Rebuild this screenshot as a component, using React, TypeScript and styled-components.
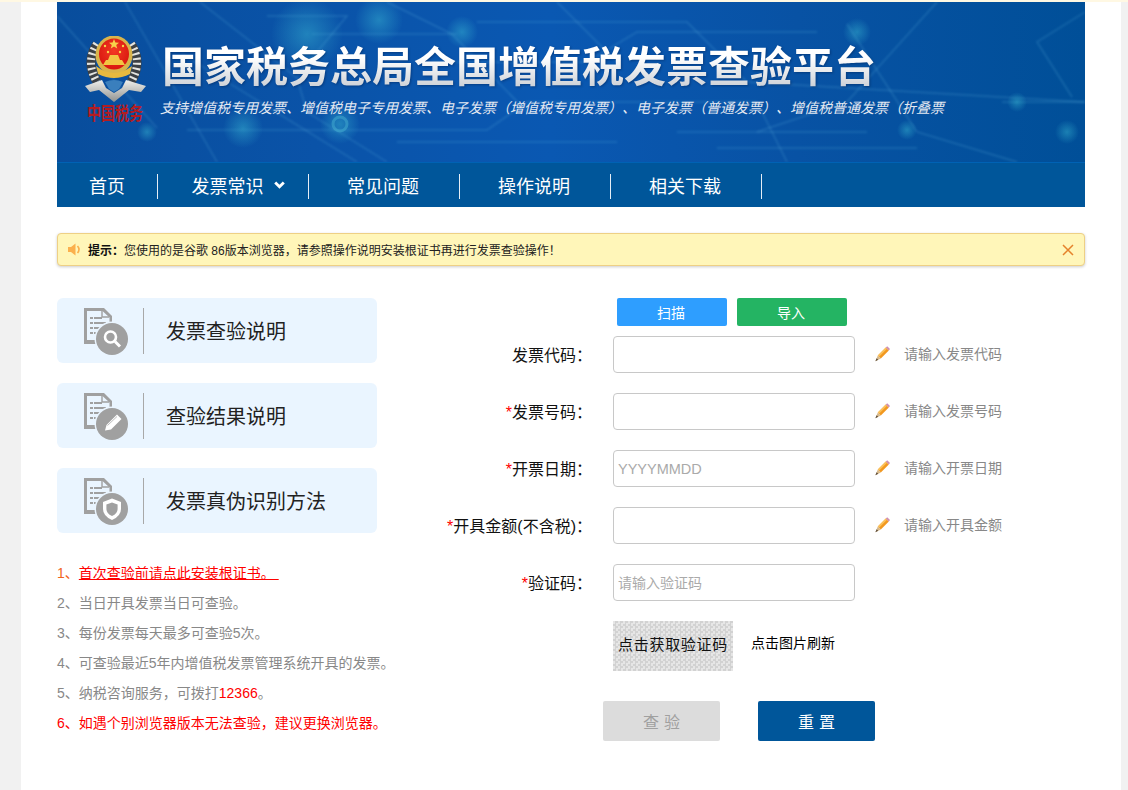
import React from 'react'
import styled, { createGlobalStyle } from 'styled-components'

const GlobalStyle = createGlobalStyle`
  html, body {
    margin: 0;
    padding: 0;
    background: #f1f1f1;
    font-family: "Liberation Sans", "Noto Sans CJK SC", sans-serif;
    text-spacing-trim: space-all;
  }
  * {
    box-sizing: border-box;
  }
`

const TopStrip = styled.div`
  height: 2px;
  background: #fff8e3;
`

const Page = styled.div`
  width: 1100px;
  margin-left: 21px;
  min-height: 788px;
  padding: 0 36px;
  background: #fff;
`

const Banner = styled.header`
  position: relative;
  display: flex;
  height: 160px;
  padding: 34px 0 0 27px;
  overflow: hidden;
  background: linear-gradient(90deg, #084d9c 0%, #0a53a8 25%, #0a58b2 48%, #0852a4 72%, #004f98 100%);
`

const CircuitArt = styled.svg`
  position: absolute;
  top: 0;
  left: 0;
`

const Logo = styled.svg`
  position: relative;
  flex: none;
`

const BannerText = styled.div`
  position: relative;
  margin-left: 13px;
`

const Title = styled.h1`
  margin: 6px 0 0 1px;
  font-size: 42px;
  line-height: 52px;
  font-weight: 700;
  white-space: nowrap;
  color: transparent;
  background: linear-gradient(180deg, #ffffff 30%, #cfd3d8 85%);
  background-clip: text;
  -webkit-background-clip: text;
  filter: drop-shadow(1px 1px 1px rgba(0, 30, 80, 0.45));
`

const SubTitle = styled.p`
  margin: 4px 0 0 -1px;
  font-size: 14px;
  line-height: 20px;
  font-style: italic;
  white-space: nowrap;
  color: #e4e9f2;
`

const Nav = styled.nav`
  display: flex;
  height: 45px;
  padding-top: 11px;
  background: #00569a;
  border-top: 1px solid #0062b4;
`

const NavItem = styled.a<{ $first?: boolean; $menu?: boolean }>`
  display: flex;
  align-items: center;
  justify-content: ${(p) => (p.$first ? 'flex-start' : 'center')};
  gap: 10px;
  width: ${(p) => (p.$first ? '101px' : '151px')};
  height: 25px;
  padding-left: ${(p) => (p.$first ? '32px' : p.$menu ? '12px' : '0')};
  padding-right: ${(p) => (p.$first ? '0' : '2px')};
  padding-bottom: 4px;
  font-size: 18px;
  color: #fff;
  border-right: 1px solid #e6eef6;
`

const Alert = styled.div`
  display: flex;
  align-items: center;
  height: 33px;
  margin-top: 26px;
  padding: 0 10px;
  font-size: 12px;
  color: #222;
  background: #fff6b9;
  border: 1px solid #eed085;
  border-radius: 4px;
  box-shadow: 0 1px 3px rgba(0, 0, 0, 0.2);
`

const AlertLabel = styled.strong`
  margin-left: 7px;
  color: #111;
`

const CloseIcon = styled.svg`
  margin-left: auto;
`

const Columns = styled.div`
  display: flex;
  align-items: flex-start;
  margin-top: 32px;
`

const Side = styled.aside`
  flex: none;
  width: 350px;
`

const GuideCard = styled.a`
  display: flex;
  align-items: center;
  width: 320px;
  height: 65px;
  margin-bottom: 20px;
  padding-left: 27px;
  font-size: 20px;
  color: #222;
  background: #eaf5ff;
  border-radius: 6px;
`

const Divider = styled.span`
  width: 1px;
  height: 46px;
  margin: 0 22px 0 13px;
  background: #a8a8a8;
`

const Notes = styled.ul`
  margin: 25px 0 0;
  padding: 0;
  list-style: none;
  font-size: 14px;
  line-height: 30px;
  white-space: nowrap;
  color: #888;
`

const Note = styled.li<{ $red?: boolean }>`
  color: ${(p) => (p.$red ? '#f00' : 'inherit')};
`

const Red = styled.span`
  color: #f00;
`

const Orange = styled.span`
  color: #f2651d;
`

const NoteLink = styled.a`
  color: #f00;
  text-decoration: underline;
  white-space: pre;
`

const Form = styled.form`
  display: flex;
  flex-direction: column;
`

const ToolRow = styled.div`
  display: flex;
  gap: 10px;
  margin-left: 210px;
  margin-bottom: 10px;
`

const ToolButton = styled.button<{ $color: string }>`
  width: 110px;
  height: 28px;
  padding: 0 2px 0 0;
  font: inherit;
  font-size: 14px;
  color: #fff;
  background: ${(p) => p.$color};
  border: 0;
  border-radius: 2px;
`

const Field = styled.div`
  display: flex;
  align-items: center;
  height: 37px;
  margin-bottom: 20px;
`

const Label = styled.label`
  width: 185px;
  margin: 0 21px 2px 0;
  font-size: 16px;
  text-align: right;
  white-space: nowrap;
  color: #111;
`

const Star = styled.span`
  color: #f00;
`

const Input = styled.input<{ $small?: boolean }>`
  width: 242px;
  height: 37px;
  padding: 0 4px;
  font-family: inherit;
  font-size: ${(p) => (p.$small ? '14px' : '14.5px')};
  background: #fff;
  border: 1px solid #c8c8c8;
  border-radius: 4px;
  outline: none;
  &::placeholder {
    color: #aaa;
  }
`

const Pencil = styled.svg`
  margin: 0 14px 1px 20px;
`

const Hint = styled.span`
  margin-bottom: 4px;
  font-size: 14px;
  color: #888;
`

const CaptchaRow = styled.div`
  display: flex;
  align-items: center;
  height: 50px;
  margin-left: 206px;
`

const Captcha = styled.div`
  display: flex;
  align-items: center;
  justify-content: center;
  width: 120px;
  height: 50px;
  margin-right: 18px;
  padding-bottom: 6px;
  font-size: 15px;
  letter-spacing: 0.7px;
  white-space: nowrap;
  color: #111;
  background: repeating-conic-gradient(#d2d2d2 0 25%, #e6e6e6 0 50%) 0 0 / 5px 5px;
`

const Refresh = styled.span`
  padding-bottom: 8px;
  font-size: 14px;
  color: #000;
`

const Actions = styled.div`
  display: flex;
  gap: 38px;
  margin: 30px 0 0 196px;
`

const ActionButton = styled.button<{ $disabled?: boolean }>`
  width: 117px;
  height: 40px;
  padding: 0 0 0 5px;
  font: inherit;
  font-size: 16px;
  letter-spacing: 5px;
  color: ${(p) => (p.$disabled ? '#a0a0a0' : '#fff')};
  background: ${(p) => (p.$disabled ? '#dcdcdc' : '#00569a')};
  border: 0;
  border-radius: 2px;
`

const Circuit = () => (
  <CircuitArt width="1028" height="160" viewBox="0 0 1028 160">
    <defs>
      <radialGradient id="glow">
        <stop offset="0%" stopColor="#3fc4d8" stopOpacity="0.42" />
        <stop offset="100%" stopColor="#3fc4d8" stopOpacity="0" />
      </radialGradient>
      <filter id="soft">
        <feGaussianBlur stdDeviation="0.8" />
      </filter>
    </defs>
    <g fill="none" stroke="#6fc5ea" strokeOpacity="0.22" strokeWidth="1.4" filter="url(#soft)">
      <path d="M0 14 L100 126" />
      <path d="M68 0 L160 160" />
      <path d="M143 0 L240 76 L250 110 L330 160" />
      <path d="M210 14 L290 14 L240 74" />
      <path d="M255 32 L400 32" />
      <path d="M330 0 L395 32 L470 110" />
      <path d="M125 52 L300 160" />
      <path d="M375 60 L530 60 L580 30 L760 30" />
      <path d="M130 128 L430 128 L470 100 L700 100" />
      <path d="M420 20 L630 20 L690 80 L1028 100" />
      <path d="M500 0 L560 60" />
      <path d="M790 22 L860 130 L960 160" />
      <path d="M700 100 L730 160" />
      <path d="M880 0 L790 100 L700 130" />
      <path d="M945 100 L1028 100" />
      <path d="M1015 95 L980 40 L1028 10" />
      <path d="M340 140 L560 140 M620 130 L810 130 M660 146 L860 146" />
    </g>
    <g fill="url(#glow)">
      <circle cx="250" cy="32" r="36" />
      <circle cx="322" cy="18" r="24" />
      <circle cx="186" cy="126" r="20" />
      <circle cx="283" cy="122" r="20" />
      <circle cx="405" cy="30" r="16" />
      <circle cx="800" cy="30" r="14" />
      <circle cx="960" cy="100" r="10" />
      <circle cx="1010" cy="130" r="12" />
      <circle cx="850" cy="128" r="10" />
      <circle cx="90" cy="130" r="10" />
    </g>
    <circle cx="283" cy="122" r="7" fill="none" stroke="#58c8dc" strokeOpacity="0.35" strokeWidth="3" />
  </CircuitArt>
)

const TaxLogo = () => (
  <Logo width="64" height="90" viewBox="0 0 64 90">
    <defs>
      <radialGradient id="seal" cx="50%" cy="40%" r="60%">
        <stop offset="0%" stopColor="#f33a24" />
        <stop offset="100%" stopColor="#d9170f" />
      </radialGradient>
      <linearGradient id="silver" x1="0" y1="0" x2="0" y2="1">
        <stop offset="0%" stopColor="#f0f0ec" />
        <stop offset="100%" stopColor="#8f918f" />
      </linearGradient>
    </defs>
    <path d="M13 8 Q1 26 13 46" fill="none" stroke="#3c4044" strokeWidth="9" />
    <path d="M47 8 Q59 26 47 46" fill="none" stroke="#3c4044" strokeWidth="9" />
    <path d="M13 8 Q1 26 13 46" fill="none" stroke="#e4e4e0" strokeWidth="8" strokeDasharray="2 3" />
    <path d="M47 8 Q59 26 47 46" fill="none" stroke="#e4e4e0" strokeWidth="8" strokeDasharray="2 3" />
    <ellipse cx="30" cy="19" rx="18.5" ry="19.5" fill="#d9b44a" />
    <ellipse cx="30" cy="18" rx="15" ry="15.5" fill="url(#seal)" />
    <path d="M28.6 6.5 l1.4 -3.5 1.4 3.5 3.6 .2 -2.8 2.3 1 3.5 -3.2 -2 -3.2 2 1 -3.5 -2.8 -2.3 z" fill="#f7d24a" />
    <g fill="#f7d24a">
      <circle cx="21" cy="10" r="1.2" />
      <circle cx="39" cy="10" r="1.2" />
      <circle cx="24" cy="16" r="1.2" />
      <circle cx="36" cy="16" r="1.2" />
    </g>
    <path d="M22 24 L38 24 L41 29 L19 29 Z M26 19 L34 19 L36 24 L24 24 Z" fill="#f2c643" />
    <path d="M12 30 Q30 44 48 30 L46 38 Q30 46 14 38 Z" fill="#e6b93f" />
    <path d="M1 50 L18 44 L22 52 L30 57 L38 52 L42 44 L62 50 L57 56 L45 54 L30 66 L15 54 L6 56 Z" fill="url(#silver)" />
    <path d="M21 46 Q30 42 39 46 L35 53 L30 56 L25 53 Z" fill="#3a7fbd" />
    <text x="3" y="65" transform="scale(1 1.3)" fontSize="14" fontWeight="700" fill="#b51c20" fontFamily="'Noto Sans CJK SC', sans-serif">中国税务</text>
  </Logo>
)

const DocIcon = ({ children }: { children: React.ReactNode }) => (
  <svg width="46" height="48" viewBox="0 0 46 48">
    <path d="M0 1 H20 L28 9 V37 H0 Z M3 4 V33 H25.5 V10.5 L18.5 4 Z" fill="#a0a0a0" fillRule="evenodd" />
    <path d="M18 4 V10 H25" fill="none" stroke="#a0a0a0" strokeWidth="1.4" />
    <path d="M6 11 H18 M6 16 H22 M6 21 H19 M6 26 H13" stroke="#a0a0a0" strokeWidth="2" strokeDasharray="3 1 20" />
    <circle cx="28" cy="32" r="17.5" fill="#eaf5ff" />
    <circle cx="28" cy="32" r="16" fill="#a0a0a0" />
    {children}
  </svg>
)

const SearchGlyph = () => (
  <g fill="none" stroke="#fff">
    <circle cx="26.5" cy="30" r="5.5" strokeWidth="2.6" />
    <path d="M31 34.5 L36 39.5" strokeWidth="3" />
  </g>
)

const PenGlyph = () => (
  <g>
    <path d="M21 38.5 L22.5 33 L33 22.5 L37.5 27 L27 37.5 Z" fill="#fff" />
    <path d="M23.5 33.5 L33 24.5" stroke="#a0a0a0" strokeWidth="0.7" />
  </g>
)

const ShieldGlyph = () => (
  <g>
    <path d="M28 21.5 L37 25 V32 Q37 39 28 43 Q19 39 19 32 V25 Z" fill="#fff" />
    <path d="M28 25.5 L33.6 27.6 V32 Q33.6 36.5 28 39 Q22.4 36.5 22.4 32 V27.6 Z" fill="#a0a0a0" />
  </g>
)

const PencilIcon = () => (
  <Pencil width="15" height="16" viewBox="0 0 15 16">
    <path d="M2.8 9.6 L10.8 1.6 L13.8 4.6 L5.8 12.6 Z" fill="#f2981f" />
    <path d="M2.8 9.6 L10.8 1.6 L12 2.8 L4 10.8 Z" fill="#fbc25a" />
    <path d="M10.8 1.6 L12.2 0.2 L15 3 L13.8 4.6 Z" fill="#cf8fb0" />
    <path d="M2.8 9.6 L5.8 12.6 L0.4 15.2 Z" fill="#d8b98a" />
    <path d="M1.6 12.2 L3.2 13.8 L0.4 15.2 Z" fill="#5a4a3a" />
  </Pencil>
)

const fields = [
  { name: '发票代码', required: false, hint: '请输入发票代码' },
  { name: '发票号码', required: true, hint: '请输入发票号码' },
  { name: '开票日期', required: true, hint: '请输入开票日期', placeholder: 'YYYYMMDD' },
  { name: '开具金额(不含税)', required: true, hint: '请输入开具金额' },
]

const App: React.FC = () => {
  return (
    <>
      <GlobalStyle />
      <TopStrip />
      <Page>
        <Banner>
          <Circuit />
          <TaxLogo />
          <BannerText>
            <Title>国家税务总局全国增值税发票查验平台</Title>
            <SubTitle>支持增值税专用发票、增值税电子专用发票、电子发票（增值税专用发票）、电子发票（普通发票）、增值税普通发票（折叠票</SubTitle>
          </BannerText>
        </Banner>
        <Nav>
          <NavItem $first>首页</NavItem>
          <NavItem $menu>
            发票常识
            <svg width="11" height="8" viewBox="0 0 11 8">
              <path d="M1.2 1.5 L5.5 5.8 L9.8 1.5" fill="none" stroke="#fff" strokeWidth="2.8" />
            </svg>
          </NavItem>
          <NavItem>常见问题</NavItem>
          <NavItem>操作说明</NavItem>
          <NavItem>相关下载</NavItem>
        </Nav>

        <Alert>
          <svg width="13" height="13" viewBox="0 0 13 13">
            <path d="M0 4 H3 L7.5 0.5 V12.5 L3 9 H0 Z" fill="#fbb04d" />
            <path d="M9.5 3 Q12.5 6.5 9.5 10" fill="none" stroke="#fbb04d" strokeWidth="1.6" />
          </svg>
          <AlertLabel>提示：</AlertLabel>
          您使用的是谷歌 86版本浏览器，请参照操作说明安装根证书再进行发票查验操作！
          <CloseIcon width="12" height="12" viewBox="0 0 12 12">
            <path d="M1 1 L11 11 M11 1 L1 11" stroke="#e5822b" strokeWidth="1.5" />
          </CloseIcon>
        </Alert>

        <Columns>
          <Side>
            <GuideCard>
              <DocIcon><SearchGlyph /></DocIcon>
              <Divider />
              发票查验说明
            </GuideCard>
            <GuideCard>
              <DocIcon><PenGlyph /></DocIcon>
              <Divider />
              查验结果说明
            </GuideCard>
            <GuideCard>
              <DocIcon><ShieldGlyph /></DocIcon>
              <Divider />
              发票真伪识别方法
            </GuideCard>
            <Notes>
              <Note>
                <Orange>1、</Orange>
                <NoteLink>{'首次查验前请点此安装根证书。 '}</NoteLink>
              </Note>
              <Note>2、当日开具发票当日可查验。</Note>
              <Note>3、每份发票每天最多可查验5次。</Note>
              <Note>4、可查验最近5年内增值税发票管理系统开具的发票。</Note>
              <Note>5、纳税咨询服务，可拨打<Red>12366</Red>。</Note>
              <Note $red>6、如遇个别浏览器版本无法查验，建议更换浏览器。</Note>
            </Notes>
          </Side>

          <Form>
            <ToolRow>
              <ToolButton type="button" $color="#2e9eff">扫描</ToolButton>
              <ToolButton type="button" $color="#24b463">导入</ToolButton>
            </ToolRow>
            {fields.map((f) => (
              <Field key={f.name}>
                <Label>
                  {f.required && <Star>*</Star>}
                  {f.name}：
                </Label>
                <Input placeholder={f.placeholder} />
                <PencilIcon />
                <Hint>{f.hint}</Hint>
              </Field>
            ))}
            <Field>
              <Label>
                <Star>*</Star>验证码：
              </Label>
              <Input $small placeholder="请输入验证码" />
            </Field>
            <CaptchaRow>
              <Captcha>点击获取验证码</Captcha>
              <Refresh>点击图片刷新</Refresh>
            </CaptchaRow>
            <Actions>
              <ActionButton type="button" $disabled>查验</ActionButton>
              <ActionButton type="button">重置</ActionButton>
            </Actions>
          </Form>
        </Columns>
      </Page>
    </>
  )
}

export default App
